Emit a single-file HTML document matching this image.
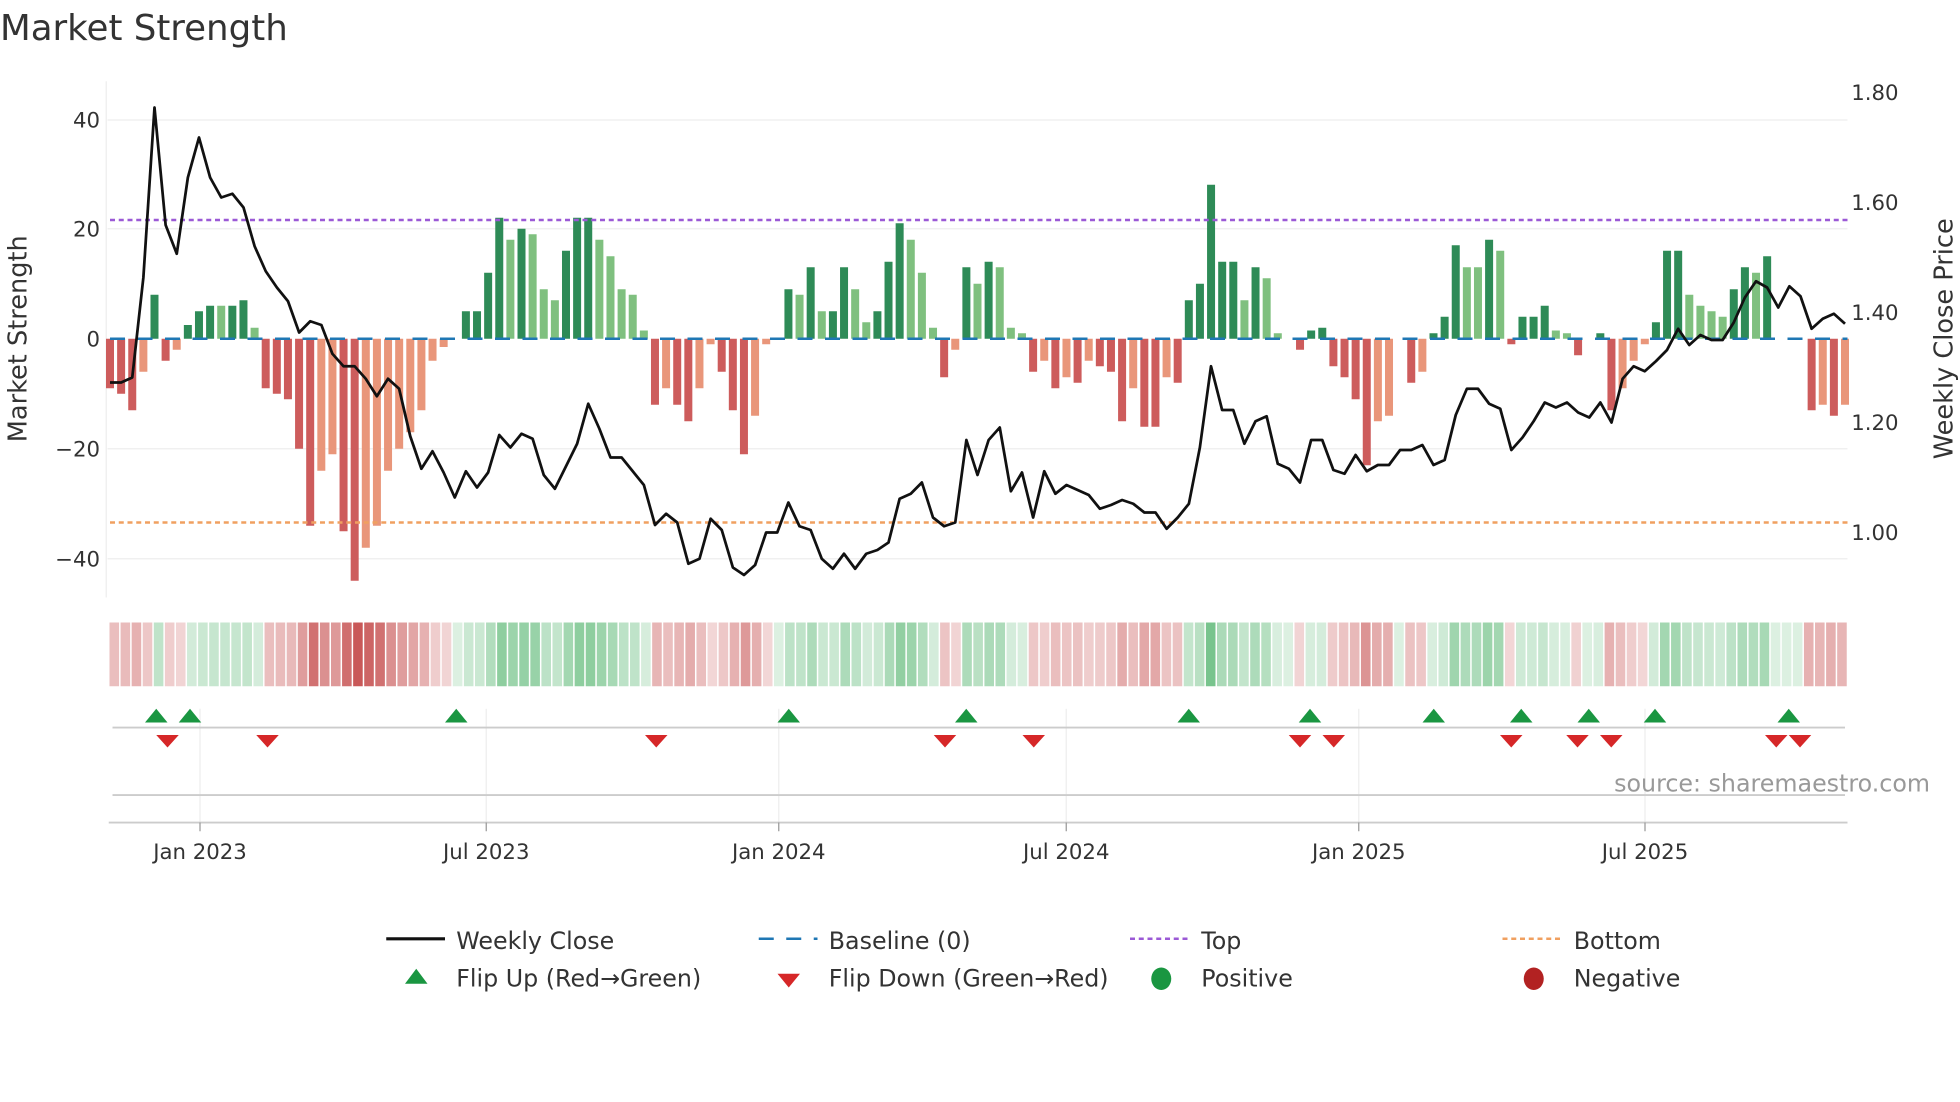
<!DOCTYPE html>
<html><head><meta charset="utf-8"><style>
html,body{margin:0;padding:0;background:#fff;}
svg{display:block;font-family:"DejaVu Sans","Liberation Sans",sans-serif;}
</style></head><body>
<svg id="s" width="1960" height="1102" viewBox="0 0 1568 881.6" xmlns="http://www.w3.org/2000/svg">
<rect width="1568" height="882" fill="#fff"/>
<text x="0" y="32" font-size="28.5" fill="#333">Market Strength</text>
<g stroke="#eee" stroke-width="1">
<line x1="86" y1="96" x2="1478" y2="96"/><line x1="86" y1="183" x2="1478" y2="183"/>
<line x1="86" y1="359" x2="1478" y2="359"/><line x1="86" y1="447" x2="1478" y2="447"/>
</g>
<line x1="85" y1="65" x2="85" y2="478" stroke="#eee"/>
<g font-size="17" fill="#333" text-anchor="end">
<text x="80" y="102">40</text><text x="80" y="189">20</text><text x="80" y="277">0</text>
<text x="80" y="365">−20</text><text x="80" y="453">−40</text>
</g>
<g font-size="17" fill="#333">
<text x="1481" y="80">1.80</text><text x="1481" y="168">1.60</text><text x="1481" y="256">1.40</text>
<text x="1481" y="344">1.20</text><text x="1481" y="432">1.00</text>
</g>
<text transform="translate(21,271) rotate(-90)" font-size="20.5" fill="#333" text-anchor="middle">Market Strength</text>
<text transform="translate(1562,271) rotate(-90)" font-size="20.5" fill="#333" text-anchor="middle">Weekly Close Price</text>
<g id="bars"></g>
<line x1="88" y1="176" x2="1478" y2="176" stroke="#9b59d6" stroke-width="2" stroke-dasharray="4,3"/>
<line x1="88" y1="418" x2="1478" y2="418" stroke="#f0a060" stroke-width="2" stroke-dasharray="4,3"/>
<line x1="88" y1="271" x2="1478" y2="271" stroke="#1f77b4" stroke-width="2" stroke-dasharray="12,10"/>
<polyline id="price" fill="none" stroke="#111" stroke-width="2.2" stroke-linejoin="round"/>
<g id="heat"></g>
<g stroke="#eee"><line x1="160" y1="567" x2="160" y2="658"/><line x1="389" y1="567" x2="389" y2="658"/><line x1="623" y1="567" x2="623" y2="658"/><line x1="853" y1="567" x2="853" y2="658"/><line x1="1087" y1="567" x2="1087" y2="658"/><line x1="1316" y1="567" x2="1316" y2="658"/></g>
<line x1="90" y1="582" x2="1476" y2="582" stroke="#ccc" stroke-width="1.5"/>
<line x1="90" y1="636" x2="1476" y2="636" stroke="#ccc" stroke-width="1.5"/>
<line x1="87" y1="658" x2="1478" y2="658" stroke="#ccc" stroke-width="1.5"/>
<g stroke="#999"><line x1="160" y1="658" x2="160" y2="665"/><line x1="389" y1="658" x2="389" y2="665"/><line x1="623" y1="658" x2="623" y2="665"/><line x1="853" y1="658" x2="853" y2="665"/><line x1="1087" y1="658" x2="1087" y2="665"/><line x1="1316" y1="658" x2="1316" y2="665"/></g>
<g id="marks"></g>
<text x="1544" y="633" font-size="19" fill="#999" text-anchor="end">source: sharemaestro.com</text>
<g font-size="17" fill="#333" text-anchor="middle">
<text x="160" y="687">Jan 2023</text><text x="389" y="687">Jul 2023</text><text x="623" y="687">Jan 2024</text>
<text x="853" y="687">Jul 2024</text><text x="1087" y="687">Jan 2025</text><text x="1316" y="687">Jul 2025</text>
</g>
<g font-size="19" fill="#333">
<line x1="309" y1="751" x2="356" y2="751" stroke="#111" stroke-width="2.5"/><text x="365" y="759">Weekly Close</text>
<line x1="607" y1="751" x2="654" y2="751" stroke="#1f77b4" stroke-width="2" stroke-dasharray="12,10"/><text x="663" y="759">Baseline (0)</text>
<line x1="904" y1="751" x2="951" y2="751" stroke="#9b59d6" stroke-width="2" stroke-dasharray="4,3"/><text x="961" y="759">Top</text>
<line x1="1202" y1="751" x2="1249" y2="751" stroke="#f0a060" stroke-width="2" stroke-dasharray="4,3"/><text x="1259" y="759">Bottom</text>
<polygon points="324,787 333,775 342,787" fill="#1a9641"/><text x="365" y="789">Flip Up (Red→Green)</text>
<polygon points="622,779 640,779 631,790" fill="#d62728"/><text x="663" y="789">Flip Down (Green→Red)</text>
<ellipse cx="929" cy="783" rx="8" ry="9" fill="#1a9641"/><text x="961" y="789">Positive</text>
<ellipse cx="1227" cy="783" rx="8" ry="9" fill="#b22222"/><text x="1259" y="789">Negative</text>
</g>
</svg>
<script>
var NS="http://www.w3.org/2000/svg";
function el(p,t,a){var e=document.createElementNS(NS,t);for(var k in a)e.setAttribute(k,a[k]);document.getElementById(p).appendChild(e);return e;}
var B=[[-9,'d'],[-10,'d'],[-13,'d'],[-6,'l'],[8,'d'],[-4,'d'],[-2,'l'],[2.5,'d'],[5,'d'],[6,'d'],[6,'l'],[6,'d'],[7,'d'],[2,'l'],[-9,'d'],[-10,'d'],[-11,'d'],[-20,'d'],[-34,'d'],[-24,'l'],[-21,'l'],[-35,'d'],[-44,'d'],[-38,'l'],[-34,'l'],[-24,'l'],[-20,'l'],[-17,'l'],[-13,'l'],[-4,'l'],[-1.5,'l'],[0,'d'],[5,'d'],[5,'d'],[12,'d'],[22,'d'],[18,'l'],[20,'d'],[19,'l'],[9,'l'],[7,'l'],[16,'d'],[22,'d'],[22,'d'],[18,'l'],[15,'l'],[9,'l'],[8,'l'],[1.5,'l'],[-12,'d'],[-9,'l'],[-12,'d'],[-15,'d'],[-9,'l'],[-1,'l'],[-6,'d'],[-13,'d'],[-21,'d'],[-14,'l'],[-1,'l'],[0,'d'],[9,'d'],[8,'l'],[13,'d'],[5,'l'],[5,'d'],[13,'d'],[9,'l'],[3,'l'],[5,'d'],[14,'d'],[21,'d'],[18,'l'],[12,'l'],[2,'l'],[-7,'d'],[-2,'l'],[13,'d'],[10,'l'],[14,'d'],[13,'l'],[2,'l'],[1,'l'],[-6,'d'],[-4,'l'],[-9,'d'],[-7,'l'],[-8,'d'],[-4,'l'],[-5,'d'],[-6,'d'],[-15,'d'],[-9,'l'],[-16,'d'],[-16,'d'],[-7,'l'],[-8,'d'],[7,'d'],[10,'d'],[28,'d'],[14,'d'],[14,'d'],[7,'l'],[13,'d'],[11,'l'],[1,'l'],[0,'d'],[-2,'d'],[1.5,'d'],[2,'d'],[-5,'d'],[-7,'d'],[-11,'d'],[-23,'d'],[-15,'l'],[-14,'l'],[0,'d'],[-8,'d'],[-6,'l'],[1,'d'],[4,'d'],[17,'d'],[13,'l'],[13,'l'],[18,'d'],[16,'l'],[-1,'d'],[4,'d'],[4,'d'],[6,'d'],[1.5,'l'],[1,'l'],[-3,'d'],[0,'d'],[1,'d'],[-13,'d'],[-9,'l'],[-4,'l'],[-1,'l'],[3,'d'],[16,'d'],[16,'d'],[8,'l'],[6,'l'],[5,'l'],[4,'l'],[9,'d'],[13,'d'],[12,'l'],[15,'d'],[0,'d'],[0,'d'],[0,'d'],[-13,'d'],[-12,'l'],[-14,'d'],[-12,'l']];
var n=B.length,x0=88,x1=1476,step=(x1-x0)/(n-1),hs=(1478-87)/n;
B.forEach(function(b,i){
 var v=b[0],cx=x0+i*step,h=Math.abs(v)*4.4,col;
 if(v>=0)col=b[1]=='d'?'#2e8b57':'#7fc07f';else col=b[1]=='d'?'#cd5c5c':'#e9967a';
 if(h>0)el('bars','rect',{x:cx-3.2,y:v>=0?271-h:271,width:6.4,height:h,fill:col});
 var hc=v>=0?'rgba(60,170,90,'+Math.min(0.75,0.18+Math.abs(v)/55).toFixed(2)+')':'rgba(195,70,70,'+Math.min(0.9,0.2+Math.abs(v)/60).toFixed(2)+')';
 if(v==0)hc='rgba(60,170,90,0.18)';
 el('heat','rect',{x:87+i*hs+0.6,y:498,width:hs-1.2,height:51,fill:hc});
});
var P=[306,306,302,222,86,180,203,142,110,142,158,155,166,197,217,230,241,266,257,260,283,293,293,303,317,303,311,349,375,361,378,398,377,390,378,348,358,347,351,380,391,373,355,323,343,366,366,377,388,420,411,418,451,447,415,424,454,460,452,426,426,402,421,424,447,455,443,455,443,440,434,399,395,386,414,421,418,352,380,352,342,393,378,414,377,395,388,392,396,407,404,400,403,410,410,423,414,403,358,293,328,328,355,337,333,371,375,386,352,352,376,379,364,377,372,372,360,360,356,372,368,332,311,311,323,327,360,350,337,322,326,322,330,334,322,338,303,293,297,289,280,263,276,268,272,272,258,238,225,230,246,229,237,263,255,251,259];
var ps=(1476-88)/(P.length-1),pts=P.map(function(y,i){return (88+i*ps).toFixed(1)+','+y}).join(' ');
document.getElementById('price').setAttribute('points',pts);
[125,152,365,631,773,951,1048,1147,1217,1271,1324,1431].forEach(function(x){el('marks','polygon',{points:(x-9)+',578 '+x+',567 '+(x+9)+',578',fill:'#1a9641'});});
[134,214,525,756,827,1040,1067,1209,1262,1289,1421,1440].forEach(function(x){el('marks','polygon',{points:(x-9)+',588 '+(x+9)+',588 '+x+',598',fill:'#d62728'});});
</script>
</body></html>
